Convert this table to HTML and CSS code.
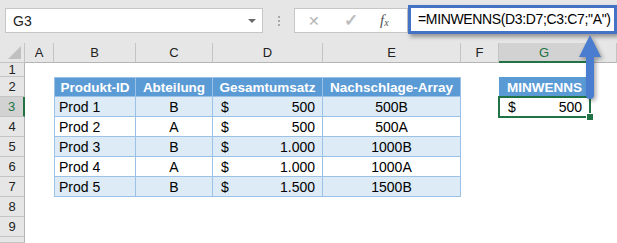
FILE: index.html
```html
<!DOCTYPE html>
<html lang="de">
<head>
  <meta charset="UTF-8">
  <title>MINWENNS</title>
  <link rel="stylesheet" href="styles.css">
</head>
<body>
  <div class="toolbar">
    <div class="namebox"><span>G3</span><span class="caret"></span></div>
    <div class="grip"><i></i><i></i><i></i></div>
    <div class="fnbox">
      <span class="icon x">&#x2715;</span>
      <span class="icon ok">&#x2713;</span>
      <span class="fx">f<sub>x</sub></span>
    </div>
    <div class="formula">=MINWENNS(D3:D7;C3:C7;"A")</div>
  </div>

  <div class="sheet">
    <!-- Spaltenköpfe -->
    <div class="corner"></div>
    <div class="hd">A</div>
    <div class="hd">B</div>
    <div class="hd">C</div>
    <div class="hd">D</div>
    <div class="hd">E</div>
    <div class="hd">F</div>
    <div class="hd sel">G</div>
    <div class="hd"></div>

    <!-- Zeile 1 -->
    <div class="rh">1</div>
    <div></div><div></div><div></div><div></div><div></div><div></div><div></div><div></div>

    <!-- Zeile 2 -->
    <div class="rh">2</div>
    <div></div>
    <div class="th first top">Produkt-ID</div>
    <div class="th top">Abteilung</div>
    <div class="th top">Gesamtumsatz</div>
    <div class="th top">Nachschlage-Array</div>
    <div></div>
    <div class="th result">MINWENNS</div>
    <div></div>

    <!-- Zeile 3 -->
    <div class="rh sel">3</div>
    <div></div>
    <div class="td first alt left">Prod 1</div>
    <div class="td alt">B</div>
    <div class="td alt money"><span>$</span><span>500</span></div>
    <div class="td alt">500B</div>
    <div></div>
    <div class="active money"><span>$</span><span>500</span></div>
    <div></div>

    <!-- Zeile 4 -->
    <div class="rh">4</div>
    <div></div>
    <div class="td first left">Prod 2</div>
    <div class="td">A</div>
    <div class="td money"><span>$</span><span>500</span></div>
    <div class="td">500A</div>
    <div></div><div></div><div></div>

    <!-- Zeile 5 -->
    <div class="rh">5</div>
    <div></div>
    <div class="td first alt left">Prod 3</div>
    <div class="td alt">B</div>
    <div class="td alt money"><span>$</span><span>1.000</span></div>
    <div class="td alt">1000B</div>
    <div></div><div></div><div></div>

    <!-- Zeile 6 -->
    <div class="rh">6</div>
    <div></div>
    <div class="td first left">Prod 4</div>
    <div class="td">A</div>
    <div class="td money"><span>$</span><span>1.000</span></div>
    <div class="td">1000A</div>
    <div></div><div></div><div></div>

    <!-- Zeile 7 -->
    <div class="rh">7</div>
    <div></div>
    <div class="td first alt left">Prod 5</div>
    <div class="td alt">B</div>
    <div class="td alt money"><span>$</span><span>1.500</span></div>
    <div class="td alt">1500B</div>
    <div></div><div></div><div></div>

    <!-- Zeilen 8-10 -->
    <div class="rh">8</div>
    <div></div><div></div><div></div><div></div><div></div><div></div><div></div><div></div>
    <div class="rh">9</div>
    <div></div><div></div><div></div><div></div><div></div><div></div><div></div><div></div>
    <div class="rh"></div>
    <div></div><div></div><div></div><div></div><div></div><div></div><div></div><div></div>
  </div>

  <!-- Hinweis-Pfeil von der Formel zur Ergebniszelle -->
  <svg class="arrow" width="30" height="70" viewBox="0 0 30 70">
    <path d="M14 2 L25 24 L18 24 L18 62 Q18 66 14 66 Q10 66 10 62 L10 24 L3 24 Z" fill="#4a7cd0"/>
  </svg>
</body>
</html>
```

FILE: styles.css
```css
* {
  margin: 0;
  padding: 0;
  box-sizing: border-box;
}
body {
  width: 617px;
  height: 243px;
  overflow: hidden;
  background: #fff;
  font-family: 'Liberation Sans', Arial, sans-serif;
  color: #000;
  position: relative;
}

/* Formelleiste */
.toolbar {
  height: 43px;
  background: #e6e6e6;
  display: flex;
  align-items: flex-start;
  padding-top: 8px;
}
.namebox {
  width: 258px;
  height: 25px;
  margin-left: 5px;
  background: #fff;
  border: 1px solid #c6c6c6;
  display: flex;
  align-items: center;
  justify-content: space-between;
  padding: 0 6px 0 7px;
  font-size: 14px;
  color: #222;
}
.caret {
  width: 0;
  height: 0;
  border-left: 4px solid transparent;
  border-right: 4px solid transparent;
  border-top: 4px solid #6a6a6a;
}
.grip {
  width: 31px;
  height: 25px;
  display: flex;
  flex-direction: column;
  align-items: center;
  justify-content: center;
  gap: 2px;
}
.grip i {
  width: 2px;
  height: 2px;
  background: #a8a8a8;
}
.fnbox {
  width: 114px;
  height: 25px;
  background: #fff;
  border: 1px solid #c6c6c6;
  display: flex;
  align-items: center;
  padding-left: 13px;
}
.icon {
  color: #b4b4b4;
  font-size: 14px;
  width: 36px;
}
.ok {
  font-size: 17px;
  font-weight: bold;
  color: #bdbdbd;
}
.fx {
  font-family: 'Liberation Serif', serif;
  font-style: italic;
  font-size: 15px;
  color: #555;
}
.fx sub {
  font-size: 10px;
  vertical-align: -1px;
}
.formula {
  width: 209px;
  height: 29px;
  margin-top: -3px;
  background: #fff;
  border: 3px solid #4472c4;
  box-shadow: 2px 3px 4px rgba(0, 0, 0, 0.35);
  font-size: 14px;
  letter-spacing: -0.35px;
  line-height: 23px;
  padding-left: 7px;
  white-space: nowrap;
  overflow: hidden;
  color: #000;
}

/* Tabellenblatt */
.sheet {
  display: grid;
  grid-template-columns: 25px 29px 82px 77px 110px 138px 38px 91px 1fr;
  grid-template-rows: 20px 14px repeat(8, 20px) 6px;
  font-size: 14px;
}
.sheet > div {
  display: flex;
  align-items: center;
  justify-content: center;
  white-space: nowrap;
}
.corner {
  background: #e6e6e6;
  border-right: 1px solid #c4c4c4;
  border-bottom: 1px solid #c4c4c4;
  position: relative;
}
.corner::after {
  content: '';
  position: absolute;
  right: 3px;
  bottom: 3px;
  border-left: 13px solid transparent;
  border-bottom: 13px solid #c0c0c0;
}
.hd {
  background: #e6e6e6;
  border-right: 1px solid #c4c4c4;
  border-bottom: 1px solid #b4b4b4;
  font-size: 13px;
  color: #222;
}
.hd.sel {
  background: #d2d2d2;
  color: #217346;
  border-bottom: 2px solid #217346;
}
.rh {
  background: #e6e6e6;
  border-right: 1px solid #b4b4b4;
  border-bottom: 1px solid #c4c4c4;
  font-size: 13px;
  color: #222;
}
.rh.sel {
  background: #d2d2d2;
  color: #217346;
  border-right: 2px solid #217346;
}

/* Datentabelle */
.th {
  background: #5b9bd5;
  color: #fff;
  font-weight: bold;
  font-size: 13.5px;
  border-right: 1px solid #9bc2e6;
  border-bottom: 1px solid #9bc2e6;
}
.th.result {
  border: none;
}
.td {
  border-right: 1px solid #9bc2e6;
  border-bottom: 1px solid #9bc2e6;
}
.first {
  border-left: 1px solid #9bc2e6;
}
.top {
  border-top: 1px solid #9bc2e6;
}
.alt {
  background: #ddebf7;
}
.sheet > .left {
  justify-content: flex-start;
  padding-left: 4px;
}
.sheet > .money {
  justify-content: space-between;
  padding: 0 7px 0 8px;
}
.sheet > .active {
  padding: 0 8px 0 9px;
  position: relative;
}
.active::before {
  content: '';
  position: absolute;
  left: -1px;
  top: -1px;
  right: -1px;
  bottom: -1px;
  border: 2px solid #217346;
}
.active::after {
  content: '';
  position: absolute;
  right: -4px;
  bottom: -4px;
  width: 6px;
  height: 6px;
  background: #217346;
  border: 1px solid #fff;
}

.arrow {
  position: absolute;
  left: 576px;
  top: 33px;
  filter: drop-shadow(2px 2px 2px rgba(0, 0, 0, 0.35));
}
```
